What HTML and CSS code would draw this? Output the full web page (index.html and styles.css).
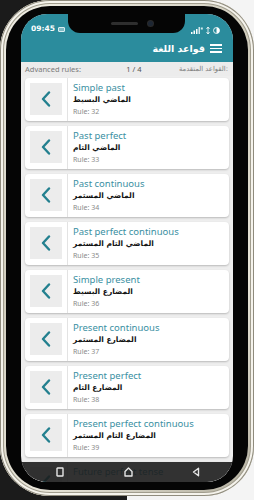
FILE: index.html
```html
<!DOCTYPE html>
<html lang="en">
<head>
    <meta charset="UTF-8">
    <meta name="viewport" content="width=device-width, initial-scale=1.0">
    <title>Grammar Rules</title>
    <link rel="stylesheet" href="styles.css">
</head>
<body>
    <div class="phone">
        <div class="bezel">
            <div class="screen">
                <div class="notch">
                    <span class="speaker"></span>
                    <span class="camera"></span>
                </div>

                <div class="appbar">
                    <div class="statusbar">
                        <div class="status-left">
                            <span class="clock">09:45</span>
                            <span class="sim-icon"></span>
                        </div>
                        <div class="status-right">
                            <svg width="12" height="7" viewBox="0 0 12 7">
                                <rect x="0" y="5" width="1.5" height="2" fill="#fff"/>
                                <rect x="2.5" y="3.5" width="1.5" height="3.5" fill="#fff"/>
                                <rect x="5" y="2" width="1.5" height="5" fill="#fff"/>
                                <rect x="7.5" y="0" width="1.5" height="7" fill="#cfe6ea"/>
                                <rect x="9.8" y="0.5" width="2" height="2" fill="#d5eaee"/>
                            </svg>
                            <svg width="4" height="7" viewBox="0 0 4 7">
                                <path d="M2 0 L2 7 M0.5 2 L2 0 L3.5 2 M0.5 5 L2 7 L3.5 5" stroke="#fff" stroke-width="0.8" fill="none"/>
                            </svg>
                            <svg width="7" height="7" viewBox="0 0 8 8">
                                <circle cx="4" cy="4" r="3.4" fill="none" stroke="#fff" stroke-width="1"/>
                                <path d="M4 0.6 A3.4 3.4 0 0 1 4 7.4 Z" fill="#fff"/>
                            </svg>
                        </div>
                    </div>
                    <div class="toolbar">
                        <span class="app-title">قواعد اللغة</span>
                        <span class="menu-icon"><i></i><i></i><i></i></span>
                    </div>
                </div>

                <div class="subheader">
                    <span class="sub-en">Advanced rules:</span>
                    <span class="pager">1 / 4</span>
                    <span class="sub-ar">القواعد المتقدمة:</span>
                </div>

                <div class="rules" id="rules"></div>

                <div class="navbar">
                    <svg width="8" height="10" viewBox="0 0 8 10">
                        <rect x="1" y="1" width="6" height="8" rx="0.5" fill="none" stroke="#e6e6e6" stroke-width="1.4"/>
                    </svg>
                    <svg width="9" height="10" viewBox="0 0 9 10">
                        <path d="M1 9 L1 4.5 L4.5 1 L8 4.5 L8 9 Z" fill="none" stroke="#e6e6e6" stroke-width="1.4" stroke-linejoin="round"/>
                    </svg>
                    <svg width="8" height="10" viewBox="0 0 8 10">
                        <path d="M6.5 1.2 L1.5 5 L6.5 8.8 Z" fill="none" stroke="#e6e6e6" stroke-width="1.4" stroke-linejoin="round"/>
                    </svg>
                </div>
            </div>
        </div>
    </div>

    <script>
        const rules = [
            { en: 'Simple past', ar: 'الماضي البسيط', num: 32 },
            { en: 'Past perfect', ar: 'الماضي التام', num: 33 },
            { en: 'Past continuous', ar: 'الماضي المستمر', num: 34 },
            { en: 'Past perfect continuous', ar: 'الماضي التام المستمر', num: 35 },
            { en: 'Simple present', ar: 'المضارع البسيط', num: 36 },
            { en: 'Present continuous', ar: 'المضارع المستمر', num: 37 },
            { en: 'Present perfect', ar: 'المضارع التام', num: 38 },
            { en: 'Present perfect continuous', ar: 'المضارع التام المستمر', num: 39 },
            // only the title of this one peeks out under the nav bar
            { en: 'Future perfect tense' }
        ];

        const list = document.getElementById('rules');

        rules.forEach(rule => {
            const card = document.createElement('div');
            card.className = 'rule-card';
            card.innerHTML = `
                <div class="thumb">
                    <div class="thumb-box">
                        <svg width="10" height="16" viewBox="0 0 10 16">
                            <path d="M8 1.5 L2 8 L8 14.5" fill="none" stroke="#23808f" stroke-width="2.4" stroke-linecap="round" stroke-linejoin="round"/>
                        </svg>
                    </div>
                </div>
                <div class="rule-text">
                    <div class="rule-en">${rule.en}</div>
                    ${rule.ar ? `<div class="rule-ar" dir="rtl">${rule.ar}</div>` : ''}
                    ${rule.num ? `<div class="rule-num">Rule: ${rule.num}</div>` : ''}
                </div>
            `;
            list.appendChild(card);
        });
    </script>
</body>
</html>
```

FILE: styles.css
```css
:root {
    --teal: #2b8c9d;
    --teal-text: #3a8fa2;
    --screen-bg: #eeeeee;
}

* {
    box-sizing: border-box;
}

body {
    margin: 0;
    width: 254px;
    height: 500px;
    overflow: hidden;
    background: linear-gradient(to right, #1b1b1b 50%, #f4f4f4 50%);
    font-family: 'Noto Sans', sans-serif;
}

.phone {
    width: 254px;
    height: 496px;
    padding: 6px;
    border-radius: 50px;
    background: linear-gradient(135deg, #f1efe6 0%, #cfcbbb 40%, #e9e6da 70%, #b3af9f 100%);
    box-shadow: inset 0 0 0 1px #8f8b7d, inset 0 0 0 3px #f5f3ec, inset 0 0 0 4px #a19d8e;
}

.bezel {
    height: 100%;
    padding: 8px 15px;
    border-radius: 44px;
    background: #050505;
}

.screen {
    position: relative;
    height: 100%;
    overflow: hidden;
    border-radius: 26px;
    background: var(--screen-bg);
}

.notch {
    position: absolute;
    top: 0;
    left: 47px;
    width: 117px;
    height: 19px;
    display: flex;
    align-items: center;
    justify-content: center;
    gap: 10px;
    padding-left: 10px;
    background: #050505;
    border-radius: 0 0 12px 12px;
    z-index: 2;
}

.speaker {
    width: 27px;
    height: 3px;
    border-radius: 2px;
    background: #2e2e2e;
}

.camera {
    width: 5px;
    height: 5px;
    border-radius: 50%;
    background: #1d2633;
    box-shadow: 0 0 0 1px #2a2a2a;
}

.appbar {
    background: var(--teal);
    color: white;
}

.statusbar {
    height: 21px;
    display: flex;
    justify-content: space-between;
    align-items: flex-end;
    padding: 0 13px 1px 10px;
}

.status-left, .status-right {
    display: flex;
    align-items: center;
    gap: 3px;
}

.clock {
    font-family: 'DejaVu Sans', sans-serif;
    font-size: 7.5px;
    font-weight: bold;
    line-height: 10px;
}

.sim-icon {
    width: 7px;
    height: 5px;
    border: 1px solid #d8eef2;
    border-radius: 1px;
    background: #7fbac5;
}

.toolbar {
    height: 27px;
    display: flex;
    justify-content: flex-end;
    align-items: center;
    gap: 5px;
    padding-right: 11px;
}

.app-title {
    font-family: 'DejaVu Sans', sans-serif;
    font-size: 9.5px;
    font-weight: bold;
}

.menu-icon {
    display: flex;
    flex-direction: column;
    gap: 2px;
    width: 12px;
}

.menu-icon i {
    display: block;
    height: 1.6px;
    background: white;
}

.subheader {
    height: 14px;
    display: flex;
    justify-content: space-between;
    align-items: center;
    padding: 0 5px 0 4px;
    background: #ececec;
    font-size: 7.5px;
    color: #7a7a7a;
}

.pager {
    color: #555;
    margin-left: 8px;
}

.sub-ar {
    font-family: 'DejaVu Sans', sans-serif;
    font-size: 6.8px;
}

.rules {
    padding: 2px 4px 0;
}

.rule-card {
    display: flex;
    height: 43px;
    margin-bottom: 5px;
    background: white;
    border-radius: 4px;
    box-shadow: 0 1px 2px rgba(0, 0, 0, 0.22);
}

.thumb {
    padding: 5px;
    border-right: 1px solid #e3e3e3;
}

.thumb-box {
    width: 32px;
    height: 32px;
    display: flex;
    align-items: center;
    justify-content: center;
    background: #ececec;
}

.rule-text {
    padding: 4px 0 0 5px;
}

.rule-en {
    font-size: 9.5px;
    line-height: 12px;
    color: var(--teal-text);
}

.rule-ar {
    font-family: 'DejaVu Sans', sans-serif;
    font-size: 7.5px;
    font-weight: bold;
    line-height: 12px;
    color: #111;
    width: max-content;
}

.rule-num {
    font-size: 7px;
    line-height: 11px;
    color: #8a8a8a;
}

.navbar {
    position: absolute;
    left: 0;
    right: 0;
    bottom: 0;
    height: 20px;
    display: flex;
    align-items: center;
    justify-content: space-between;
    padding: 0 33px 0 35px;
    background: rgba(28, 28, 28, 0.9);
}
```
